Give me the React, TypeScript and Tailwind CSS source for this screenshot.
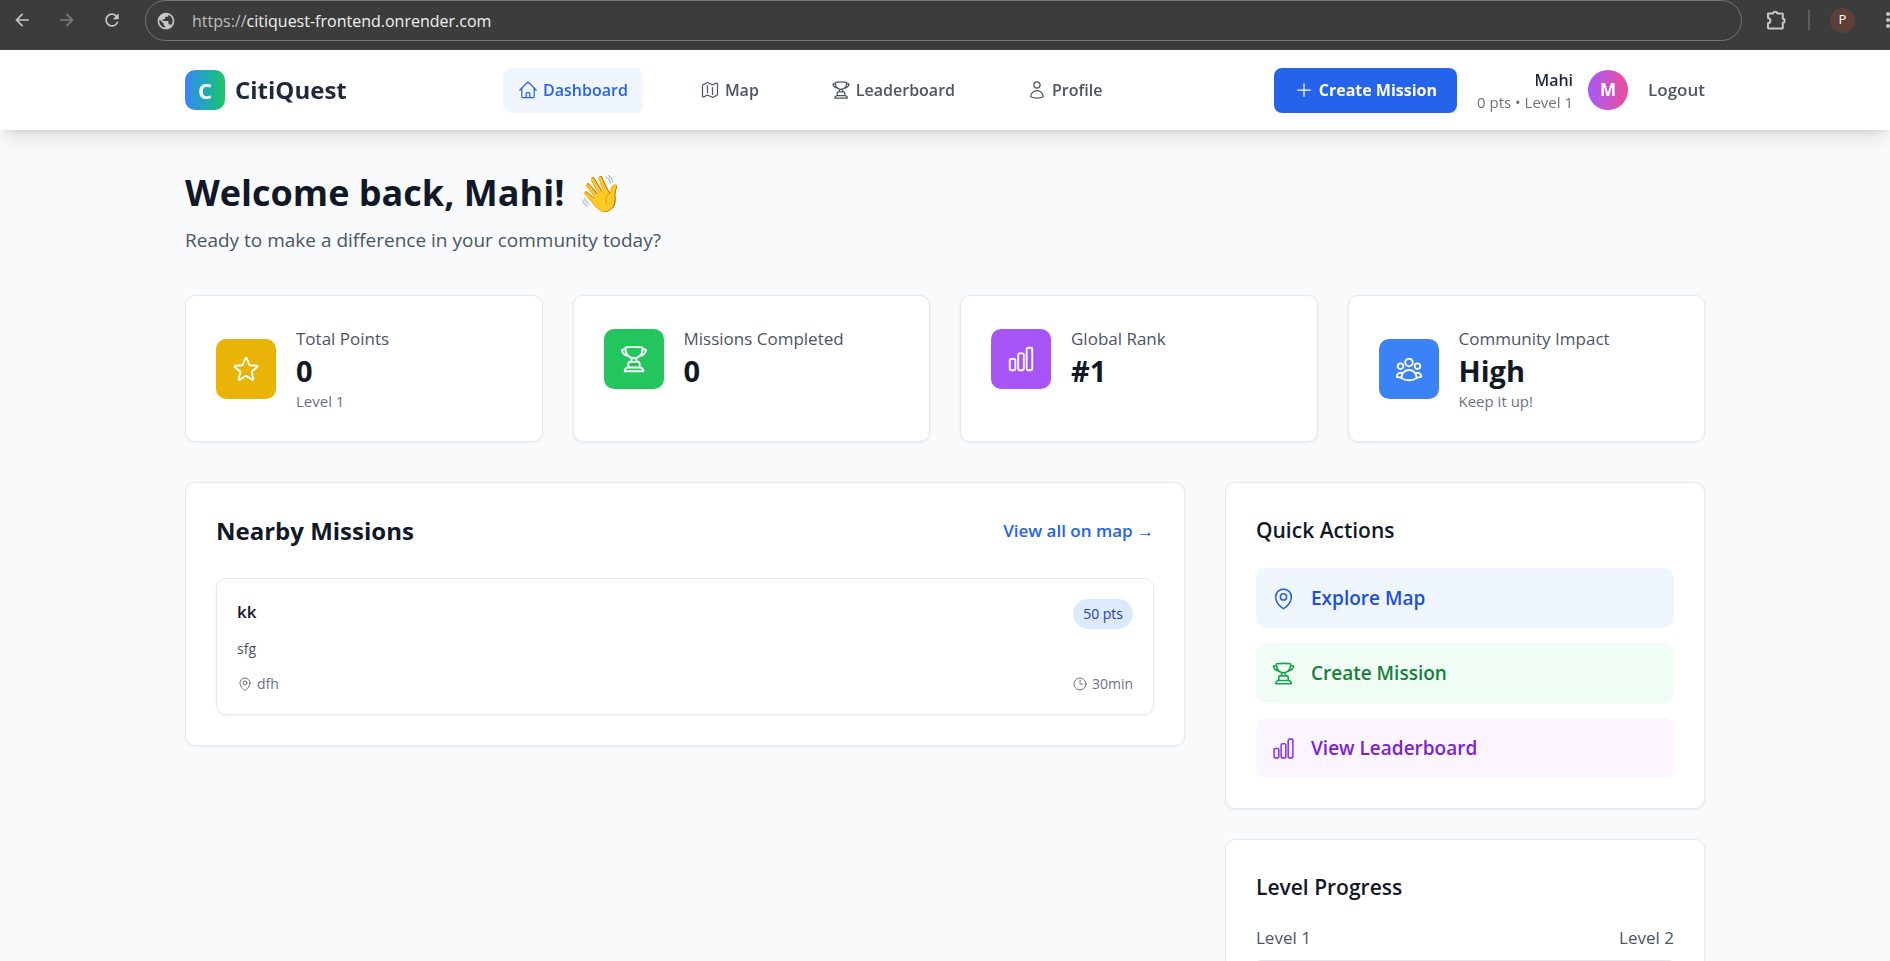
import React from "react";
import type { IconType } from "react-icons";
import {
  HiOutlineChartBar,
  HiOutlineClock,
  HiOutlineHome,
  HiOutlineMap,
  HiOutlineMapPin,
  HiOutlinePlus,
  HiOutlineStar,
  HiOutlineTrophy,
  HiOutlineUser,
  HiOutlineUserGroup,
} from "react-icons/hi2";
import { MdArrowBack, MdArrowForward, MdMoreVert, MdPublic, MdRefresh } from "react-icons/md";

function ExtensionIcon() {
  return (
    <svg viewBox="0 0 24 24" className="size-6" fill="none" stroke="currentColor" strokeWidth="2" strokeLinejoin="round" aria-hidden="true">
      <path d="M4 5.500h5.200a2 1.800 0 0 1 4 0H18a.8.8 0 0 1 .8.8v4.400a1.800 2 0 0 1 0 4v5a.8.8 0 0 1-.8.8H4.800a.8.8 0 0 1-.8-.8v-4.400c3.200-.4 3.200-4.800 0-5.200Z" />
    </svg>
  );
}

function BrowserBar() {
  return (
    <header className="flex h-[50px] shrink-0 items-start overflow-hidden border-b border-[#474747] bg-[#3c3c3c] text-[#c7c7c7]">
      <div className="flex h-10 items-center gap-[25px] pl-3">
        <button aria-label="Back"><MdArrowBack className="size-5" /></button>
        <button aria-label="Forward" className="text-[#7d7d7d]"><MdArrowForward className="size-5" /></button>
        <button aria-label="Reload"><MdRefresh className="size-5" /></button>
      </div>
      <div className="ml-[23px] flex h-[41px] flex-1 items-center rounded-full border border-[#757575] pl-[10px]">
        <MdPublic className="size-5" />
        <label htmlFor="url" className="ml-4 text-[16px] text-[#bdbdbd]">https://</label>
        <input
          id="url"
          type="text"
          defaultValue="citiquest-frontend.onrender.com"
          className="min-w-0 flex-1 bg-transparent text-[16px] text-[#f1f1f1] outline-none"
        />
      </div>
      <div className="flex h-10 items-center pl-[22px]">
        <button aria-label="Extensions"><ExtensionIcon /></button>
        <span className="ml-5 h-5 w-[2px] bg-[#5f5f5f]" />
        <button aria-label="Account" className="ml-5 size-[25px] rounded-full bg-[#5d4037] text-[13px] text-white">P</button>
        <button aria-label="Browser menu" className="-mr-[10px] ml-[21px]"><MdMoreVert className="size-6" /></button>
      </div>
    </header>
  );
}

const navItems: { label: string; icon: IconType; active?: boolean }[] = [
  { label: "Dashboard", icon: HiOutlineHome, active: true },
  { label: "Map", icon: HiOutlineMap },
  { label: "Leaderboard", icon: HiOutlineTrophy },
  { label: "Profile", icon: HiOutlineUser },
];

function NavBar() {
  return (
    <div className="sticky top-0 z-10 bg-white shadow-[0_12px_19px_-4px_rgba(0,0,0,0.1),0_5px_8px_-4px_rgba(0,0,0,0.1)]">
      <div className="mx-auto flex h-20 max-w-[1520px] items-center justify-between">
        <a href="#" className="flex items-center gap-[10px]">
          <span className="flex size-10 items-center justify-center rounded-[10px] bg-linear-to-r from-[#3b82f6] to-[#22c55e] text-[22px] font-bold text-white">C</span>
          <span className="text-[24px] font-bold text-[#1f2937]">CitiQuest</span>
        </a>
        <nav className="flex items-center gap-[42px]">
          {navItems.map(({ label, icon: Icon, active }) => (
            <a
              key={label}
              href="#"
              className={`flex h-[45px] items-center gap-[5px] rounded-lg px-[15px] text-[16px] font-semibold ${active ? "bg-[#eff6ff] text-[#2563eb]" : "text-[#4b5563]"}`}
            >
              <Icon className="size-5" />
              {label}
            </a>
          ))}
        </nav>
        <div className="flex items-center gap-5">
          <button className="flex h-[45px] items-center gap-[5px] rounded-lg bg-[#2563eb] px-5 text-[16px] font-bold text-white">
            <HiOutlinePlus className="size-5" />
            Create Mission
          </button>
          <div className="flex items-center gap-[15px]">
            <div className="text-right">
              <p className="text-[16px] leading-6 font-semibold text-[#1f2937]">Mahi</p>
              <p className="text-[15px] leading-5 text-[#6b7280]">0 pts • Level 1</p>
            </div>
            <span className="flex size-10 items-center justify-center rounded-full bg-linear-to-r from-[#a855f7] to-[#ec4899] text-[17px] font-bold text-white">M</span>
          </div>
          <button className="text-[17px] font-semibold text-[#4b5563]">Logout</button>
        </div>
      </div>
    </div>
  );
}

const stats: { label: string; value: string; note?: string; icon: IconType; color: string }[] = [
  { label: "Total Points", value: "0", note: "Level 1", icon: HiOutlineStar, color: "bg-[#eab308]" },
  { label: "Missions Completed", value: "0", icon: HiOutlineTrophy, color: "bg-[#22c55e]" },
  { label: "Global Rank", value: "#1", icon: HiOutlineChartBar, color: "bg-[#a855f7]" },
  { label: "Community Impact", value: "High", note: "Keep it up!", icon: HiOutlineUserGroup, color: "bg-[#3b82f6]" },
];

const actions: { label: string; icon: IconType; box: string; tint: string }[] = [
  { label: "Explore Map", icon: HiOutlineMapPin, box: "bg-[#eff6ff] text-[#1d4ed8]", tint: "text-[#2563eb]" },
  { label: "Create Mission", icon: HiOutlineTrophy, box: "bg-[#f0fdf4] text-[#15803d]", tint: "text-[#16a34a]" },
  { label: "View Leaderboard", icon: HiOutlineChartBar, box: "bg-[#faf5ff] text-[#7e22ce]", tint: "text-[#9333ea]" },
];

function Card({ className = "", children }: { className?: string; children: React.ReactNode }) {
  return (
    <section className={`rounded-[10px] border border-[#e5e7eb] bg-white p-[30px] shadow-[0_1px_3px_rgba(0,0,0,0.06)] ${className}`}>
      {children}
    </section>
  );
}

export default function App() {
  return (
    <div className="flex h-screen flex-col font-['Open_Sans','Noto_Sans',sans-serif]">
      <BrowserBar />
      <div className="flex-1 overflow-y-auto bg-[#f9fafb] [scrollbar-width:none]">
        <NavBar />
        <main className="mx-auto max-w-[1520px] py-10">
          <h1 className="flex items-center gap-[14px] text-[36px] leading-[45px] font-bold text-[#111827]">
            Welcome back, Mahi! <span>👋</span>
          </h1>
          <p className="mt-[10px] text-[19px] leading-[30px] text-[#4b5563]">Ready to make a difference in your community today?</p>

          <div className="mt-10 grid grid-cols-4 gap-[30px]">
            {stats.map(({ label, value, note, icon: Icon, color }) => (
              <Card key={label}>
                <div className="flex items-center gap-5">
                  <div className={`flex size-[60px] items-center justify-center rounded-[10px] text-white ${color}`}>
                    <Icon className="size-[30px]" />
                  </div>
                  <div>
                    <p className="text-[17px] leading-[25px] font-medium text-[#4b5563]">{label}</p>
                    <p className="text-[29px] leading-10 font-bold text-[#111827]">{value}</p>
                    {note && <p className="text-[15px] leading-5 text-[#6b7280]">{note}</p>}
                  </div>
                </div>
              </Card>
            ))}
          </div>

          <div className="mt-10 grid grid-cols-3 items-start gap-10">
            <Card className="col-span-2">
              <div className="flex items-center justify-between">
                <h2 className="text-[24px] leading-[35px] font-bold text-[#111827]">Nearby Missions</h2>
                <a href="#" className="text-[17px] font-semibold text-[#2563eb]">View all on map →</a>
              </div>
              <article className="mt-[30px] rounded-[10px] border border-[#e5e7eb] p-5 shadow-[0_1px_3px_rgba(0,0,0,0.06)]">
                <div className="flex items-start justify-between">
                  <h3 className="text-[17px] leading-[25px] font-semibold text-[#111827]">kk</h3>
                  <span className="rounded-full bg-[#dbeafe] px-[10px] py-[5px] text-[14px] leading-5 font-medium text-[#1e40af]">50 pts</span>
                </div>
                <p className="mt-[10px] text-[14px] leading-5 text-[#4b5563]">sfg</p>
                <div className="mt-[15px] flex justify-between text-[14px] leading-5 text-[#6b7280]">
                  <span className="flex items-center gap-1"><HiOutlineMapPin className="size-4" />dfh</span>
                  <span className="flex items-center gap-1"><HiOutlineClock className="size-4" />30min</span>
                </div>
              </article>
            </Card>

            <div className="flex flex-col gap-[30px]">
              <Card>
                <h2 className="text-[21px] leading-[35px] font-semibold text-[#111827]">Quick Actions</h2>
                <div className="mt-5 flex flex-col gap-[15px]">
                  {actions.map(({ label, icon: Icon, box, tint }) => (
                    <a key={label} href="#" className={`flex h-[60px] items-center gap-[15px] rounded-[10px] px-[15px] text-[19px] font-semibold ${box}`}>
                      <Icon className={`size-[25px] ${tint}`} />
                      {label}
                    </a>
                  ))}
                </div>
              </Card>
              <Card>
                <h2 className="text-[21px] leading-[35px] font-semibold text-[#111827]">Level Progress</h2>
                <div className="mt-5 flex justify-between text-[17px] leading-[25px] text-[#4b5563]">
                  <span>Level 1</span>
                  <span>Level 2</span>
                </div>
                <div role="progressbar" aria-label="Level Progress" aria-valuenow={0} className="mt-[10px] h-[10px] rounded-full bg-[#e5e7eb]" />
              </Card>
            </div>
          </div>
        </main>
      </div>
    </div>
  );
}
